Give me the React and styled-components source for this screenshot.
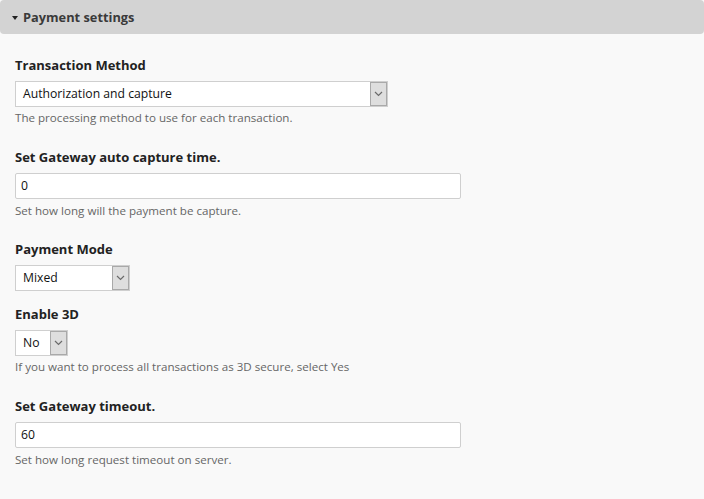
import React from 'react'
import styled, { createGlobalStyle } from 'styled-components'

const GlobalStyle = createGlobalStyle`
  html, body {
    margin: 0;
    padding: 0;
    background: #f9f9f9;
  }
  body {
    font-family: "Open Sans", "Noto Sans", sans-serif;
    color: #333;
  }
`

const fields = [
  { type: 'select', label: 'Transaction Method', value: 'Authorization and capture', width: 373, help: 'The processing method to use for each transaction.' },
  { type: 'text', label: 'Set Gateway auto capture time.', value: '0', help: 'Set how long will the payment be capture.' },
  { type: 'select', label: 'Payment Mode', value: 'Mixed', width: 115 },
  { type: 'select', label: 'Enable 3D', value: 'No', width: 53, help: 'If you want to process all transactions as 3D secure, select Yes' },
  { type: 'text', label: 'Set Gateway timeout.', value: '60', help: 'Set how long request timeout on server.' },
]

const Chevron = () => (
  <svg width="9" height="6" viewBox="0 0 9 6">
    <path d="M1 1 L4.5 4.5 L8 1" fill="none" stroke="#6b6b6b" strokeWidth="1.2" />
  </svg>
)

const Field = ({ field }) => {
  const isText = field.type === 'text'
  return (
    <Item $hasHelp={!!field.help}>
      <Label>{field.label}</Label>
      {isText ? (
        <TextInput type="text" defaultValue={field.value} />
      ) : (
        <SelectBox $width={field.width}>
          <SelectText>{field.value}</SelectText>
          <ArrowBox>
            <Chevron />
          </ArrowBox>
        </SelectBox>
      )}
      {field.help && <Help $afterInput={isText}>{field.help}</Help>}
    </Item>
  )
}

const App = () => (
  <>
    <GlobalStyle />
    <Fieldset>
      <Legend>
        <Caret />
        Payment settings
      </Legend>
      <Body>
        {fields.map((f) => (
          <Field key={f.label} field={f} />
        ))}
      </Body>
    </Fieldset>
  </>
)

export default App

const Fieldset = styled.div`
  width: 704px;
  min-height: 499px;
`

const Legend = styled.div`
  height: 34px;
  background: #d3d3d3;
  border-radius: 4px;
  display: flex;
  align-items: center;
  padding-left: 12px;
  font-size: 12.8px;
  font-weight: 700;
  color: #3a3a3a;
`

const Caret = styled.span`
  width: 0;
  height: 0;
  border-left: 3.5px solid transparent;
  border-right: 3.5px solid transparent;
  border-top: 4px solid #222;
  margin-right: 5px;
  margin-top: 1px;
`

const Body = styled.div`
  padding: 22px 15px 0;
  display: flex;
  flex-direction: column;
`

const Item = styled.div`
  display: flex;
  flex-direction: column;
  align-items: flex-start;
  margin-bottom: ${(p) => (p.$hasHelp ? 21.5 : 14)}px;
`

const Label = styled.div`
  font-size: 13px;
  font-weight: 700;
  color: #222;
  line-height: 18px;
  margin-bottom: 7px;
`

const SelectBox = styled.div`
  box-sizing: border-box;
  width: ${(p) => p.$width}px;
  height: 26px;
  border: 1px solid #cfcfcf;
  background: #fff;
  display: flex;
  align-items: stretch;
`

const SelectText = styled.div`
  flex: 1;
  padding-left: 7px;
  font-size: 12.2px;
  line-height: 24px;
  color: #111;
`

const ArrowBox = styled.div`
  box-sizing: border-box;
  width: 17px;
  border: 1px solid #a9a9a9;
  background: #dedede;
  display: flex;
  align-items: center;
  justify-content: center;
`

const TextInput = styled.input`
  box-sizing: border-box;
  width: 446px;
  height: 26px;
  margin: 0;
  border: 1px solid #cfcfcf;
  border-radius: 2px;
  background: #fff;
  padding: 0 5px;
  font-family: inherit;
  font-size: 12.2px;
  color: #111;
  outline: none;
`

const Help = styled.div`
  font-size: 11.6px;
  color: #666;
  line-height: 16px;
  margin-top: ${(p) => (p.$afterInput ? 4 : 3)}px;
`
